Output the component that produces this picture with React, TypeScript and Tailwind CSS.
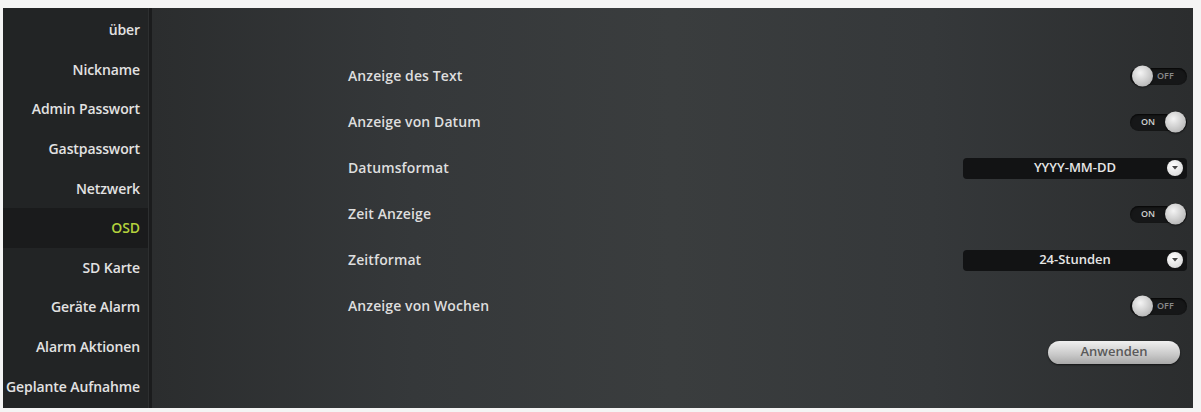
import React from "react";

const nav = [
  "über",
  "Nickname",
  "Admin Passwort",
  "Gastpasswort",
  "Netzwerk",
  "OSD",
  "SD Karte",
  "Geräte Alarm",
  "Alarm Aktionen",
  "Geplante Aufnahme",
];

function Toggle({ on }: { on: boolean }) {
  return (
    <div className="relative flex h-[17px] w-[57px] items-center rounded-full bg-[#161718] shadow-[inset_0_1px_2px_rgba(0,0,0,0.8)]">
      {on ? (
        <>
          <span className="ml-[11px] text-[9px] font-semibold text-[#cfcfcf]">ON</span>
          <span className="absolute right-[1px] top-1/2 h-[21px] w-[21px] -translate-y-1/2 rounded-full bg-[radial-gradient(circle_at_40%_35%,#f4f4f4,#bdbdbd_70%,#9a9a9a)] shadow-[0_1px_2px_rgba(0,0,0,0.6)]" />
        </>
      ) : (
        <>
          <span className="absolute left-[2px] top-1/2 h-[21px] w-[21px] -translate-y-1/2 rounded-full bg-[radial-gradient(circle_at_40%_35%,#f4f4f4,#bdbdbd_70%,#9a9a9a)] shadow-[0_1px_2px_rgba(0,0,0,0.6)]" />
          <span className="ml-[27px] text-[9px] font-semibold text-[#8a8a8a]">OFF</span>
        </>
      )}
    </div>
  );
}

function Select({ value }: { value: string }) {
  return (
    <div className="relative flex h-[21px] w-[224px] items-center justify-center rounded-[4px] bg-[#121314]">
      <span className="text-[13px] font-semibold text-[#e6e6e6]">{value}</span>
      <span className="absolute right-[4px] top-1/2 flex h-[16px] w-[16px] -translate-y-1/2 items-center justify-center rounded-full bg-[radial-gradient(circle_at_40%_35%,#ffffff,#d0d0d0)]">
        <svg width="6" height="4" viewBox="0 0 6 4">
          <path d="M0 0 L6 0 L3 3.5 Z" fill="#444" />
        </svg>
      </span>
    </div>
  );
}

export default function App() {
  const rows: { label: string; control: React.ReactNode }[] = [
    { label: "Anzeige des Text", control: <Toggle on={false} /> },
    { label: "Anzeige von Datum", control: <Toggle on={true} /> },
    { label: "Datumsformat", control: <Select value="YYYY-MM-DD" /> },
    { label: "Zeit Anzeige", control: <Toggle on={true} /> },
    { label: "Zeitformat", control: <Select value="24-Stunden" /> },
    { label: "Anzeige von Wochen", control: <Toggle on={false} /> },
  ];
  return (
    <div
      className="h-[412px] w-[1201px] bg-[#f4f4f4] pl-[3px] pr-[8px] pt-[8px] pb-[4px]"
      style={{ fontFamily: '"Open Sans", "Liberation Sans", sans-serif' }}
    >
      <div className="flex h-[400px] w-[1190px] bg-[#222425]">
        <div className="flex w-[145px] shrink-0 flex-col pt-[2px]">
          {nav.map((n) => (
            <div
              key={n}
              className={`flex h-[39.6px] shrink-0 items-center justify-end whitespace-nowrap pr-[8px] text-[14px] font-semibold tracking-[-0.1px] ${
                n === "OSD" ? "bg-[#1a1b1c] text-[#b4d23c]" : "text-[#e2e2e2]"
              }`}
            >
              {n}
            </div>
          ))}
        </div>
        <div className="w-[4px] bg-[#1b1c1d] border-l border-[#2d2f30]" />
        <div className="flex flex-1 flex-col bg-[linear-gradient(90deg,#2b2d2e_0%,#35383a_25%,#3a3d3e_50%,#35383a_75%,#2b2d2e_100%)] pt-[45px] pr-[6px]">
          {rows.map((r) => (
            <div key={r.label} className="flex h-[46px] shrink-0 items-center justify-between">
              <span className="ml-[196px] -mt-[2px] text-[14px] font-semibold tracking-[0.1px] text-[#dedede]">
                {r.label}
              </span>
              {r.control}
            </div>
          ))}
          <div className="flex h-[46px] shrink-0 items-center justify-end pr-[7px]">
            <button className="h-[23px] w-[132px] rounded-full bg-[linear-gradient(180deg,#f0f0f0,#c8c8c8_60%,#a8a8a8)] text-[13px] font-semibold text-[#5a5a5a] shadow-[0_1px_2px_rgba(0,0,0,0.6)]">
              Anwenden
            </button>
          </div>
        </div>
      </div>
    </div>
  );
}
